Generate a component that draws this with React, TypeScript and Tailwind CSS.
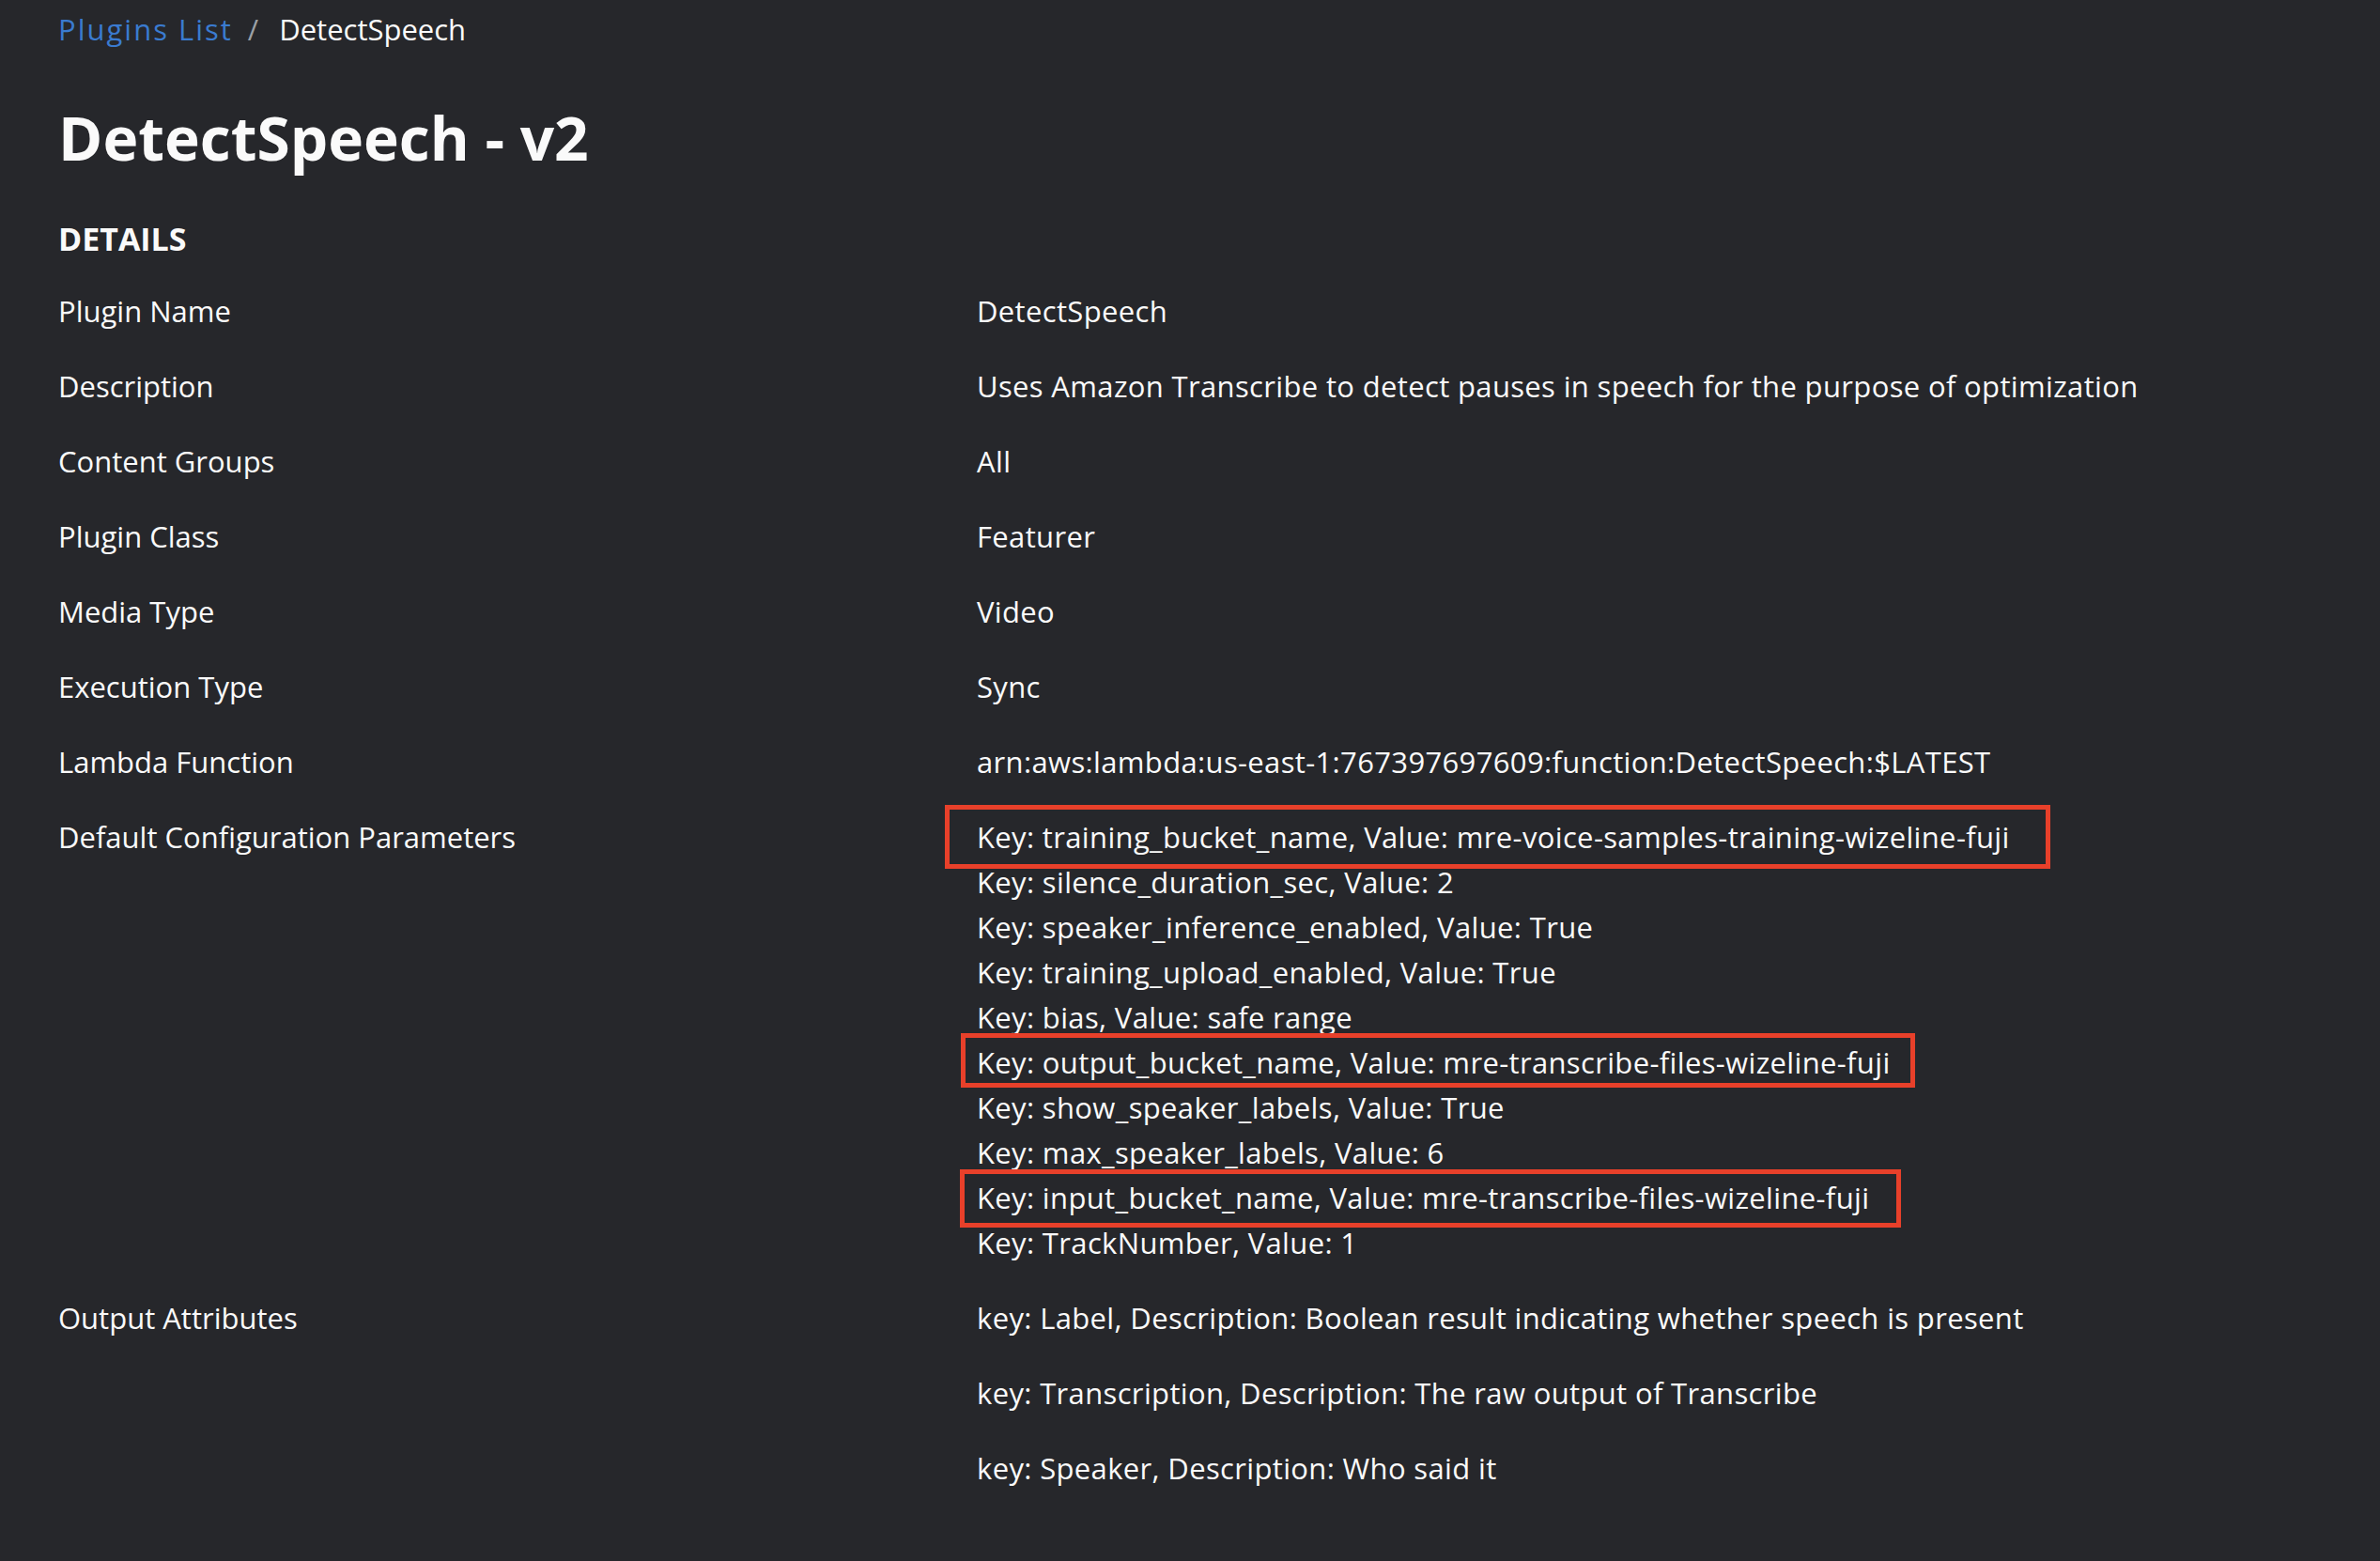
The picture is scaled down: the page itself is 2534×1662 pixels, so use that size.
type Row = { label: string; value: string };

const rows: Row[] = [
  { label: "Plugin Name", value: "DetectSpeech" },
  {
    label: "Description",
    value: "Uses Amazon Transcribe to detect pauses in speech for the purpose of optimization",
  },
  { label: "Content Groups", value: "All" },
  { label: "Plugin Class", value: "Featurer" },
  { label: "Media Type", value: "Video" },
  { label: "Execution Type", value: "Sync" },
  {
    label: "Lambda Function",
    value: "arn:aws:lambda:us-east-1:767397697609:function:DetectSpeech:$LATEST",
  },
];

type Param = { text: string; box?: string };

const params: Param[] = [
  {
    text: "Key: training_bucket_name, Value: mre-voice-samples-training-wizeline-fuji",
    box: "-left-[34px] -right-[43px] -top-[10px] -bottom-[10px]",
  },
  { text: "Key: silence_duration_sec, Value: 2" },
  { text: "Key: speaker_inference_enabled, Value: True" },
  { text: "Key: training_upload_enabled, Value: True" },
  { text: "Key: bias, Value: safe range" },
  {
    text: "Key: output_bucket_name, Value: mre-transcribe-files-wizeline-fuji",
    box: "-left-[17px] -right-[26px] -top-[7px] -bottom-[3px]",
  },
  { text: "Key: show_speaker_labels, Value: True" },
  { text: "Key: max_speaker_labels, Value: 6" },
  {
    text: "Key: input_bucket_name, Value: mre-transcribe-files-wizeline-fuji",
    box: "-left-[18px] -right-[34px] -top-[6px] -bottom-[8px]",
  },
  { text: "Key: TrackNumber, Value: 1" },
];

const outputs = [
  "key: Label, Description: Boolean result indicating whether speech is present",
  "key: Transcription, Description: The raw output of Transcribe",
  "key: Speaker, Description: Who said it",
];

function DetailRow({ label, children }: { label: string; children: React.ReactNode }) {
  return (
    <div className="flex pb-8">
      <div className="w-[978px] shrink-0">{label}</div>
      <div className="flex-1 tracking-[0.35px]">{children}</div>
    </div>
  );
}

export default function App() {
  return (
    <div
      className="min-h-screen bg-[#26272b] text-[#fafafa] px-[62px] pt-[7px] pb-[40px] text-[31px] leading-[48px]"
      style={{ fontFamily: '"Open Sans", "Noto Sans", sans-serif' }}
    >
      <nav className="flex items-center h-[48px]">
        <span className="text-[#3a7bd0] tracking-[2px]">Plugins List</span>
        <span className="ml-[16px] mr-[22px] text-[#9ba0a6]">/</span>
        <span>DetectSpeech</span>
      </nav>

      <h1 className="mt-[52px] text-[64px] leading-[80px] font-bold">DetectSpeech - v2</h1>

      <h2 className="mt-[43px] text-[34px] leading-[48px] font-bold">DETAILS</h2>

      <div className="mt-[29px]">
        {rows.map((r) => (
          <DetailRow key={r.label} label={r.label}>
            {r.value}
          </DetailRow>
        ))}

        <DetailRow label="Default Configuration Parameters">
          {params.map((p) => (
            <div key={p.text}>
              <span className="relative inline-block">
                {p.text}
                {p.box && (
                  <span className={`absolute border-[5px] border-[#e8402a] ${p.box}`} />
                )}
              </span>
            </div>
          ))}
        </DetailRow>

        <DetailRow label="Output Attributes">
          <div className="flex flex-col gap-8">
            {outputs.map((o) => (
              <div key={o}>{o}</div>
            ))}
          </div>
        </DetailRow>
      </div>
    </div>
  );
}
